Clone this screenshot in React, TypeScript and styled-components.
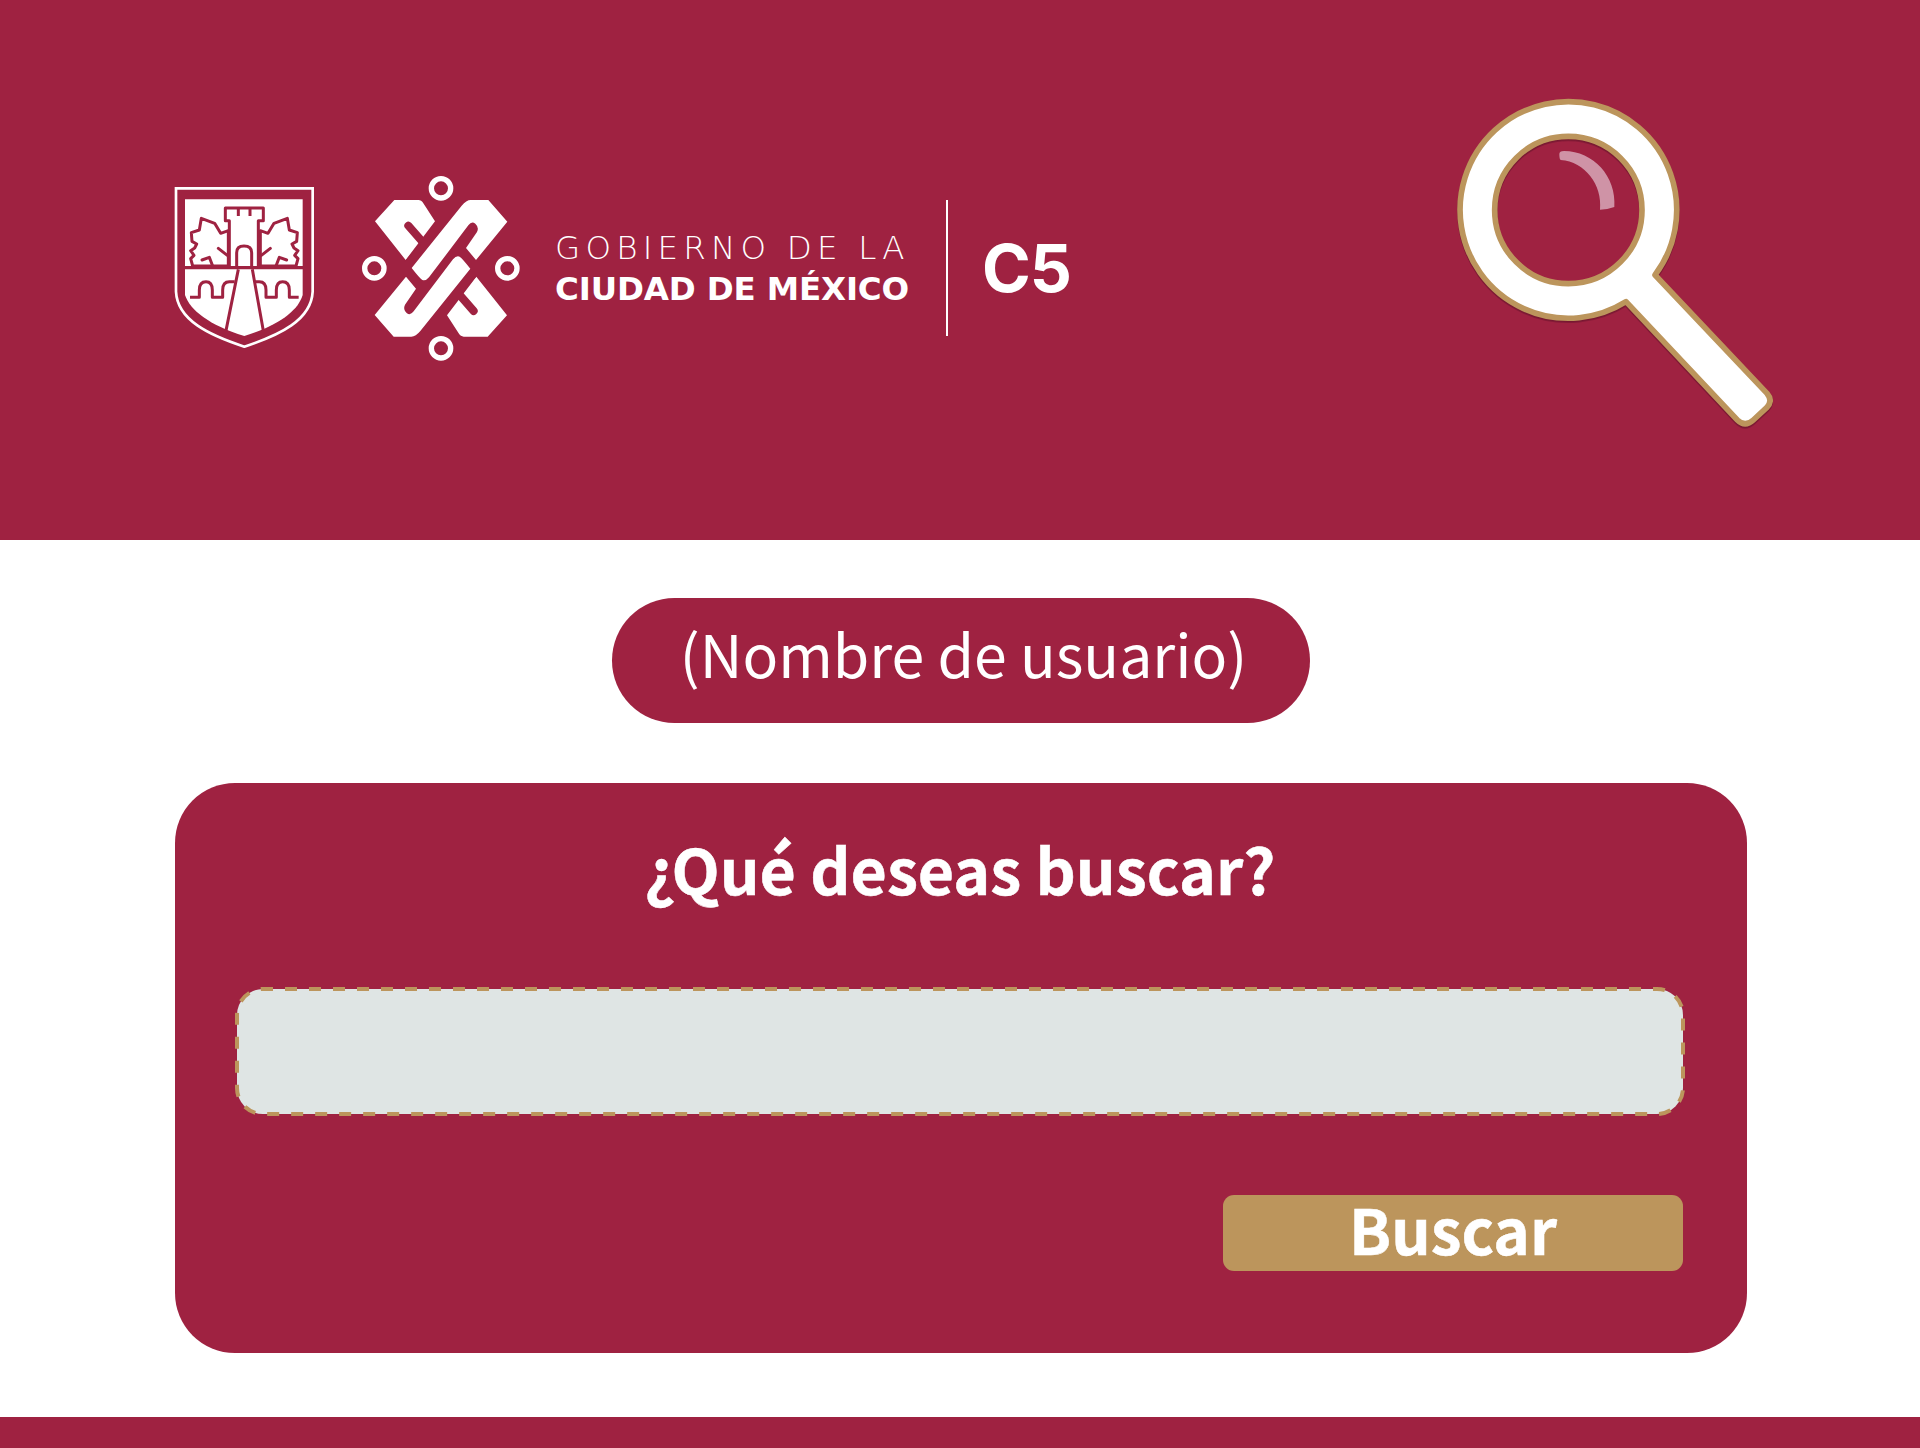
import React from "react";
import styled, { createGlobalStyle } from "styled-components";

const burgundy = "#9f2241";
const gold = "#bc955c";
const cjk = `"Noto Sans CJK SC", "Noto Sans", sans-serif`;

const Global = createGlobalStyle`
  html, body { margin: 0; padding: 0; background: #fff; }
  * { box-sizing: border-box; }
`;

const Page = styled.div`
  width: 1920px;
  height: 1448px;
  display: flex;
  flex-direction: column;
  background: #fff;
  overflow: hidden;
`;

const Header = styled.header`
  height: 540px;
  flex: none;
  background: ${burgundy};
  display: flex;
  justify-content: space-between;
  align-items: flex-start;
  padding: 0 130px 0 170px;
`;

const LogoRow = styled.div`
  margin-top: 174px;
  height: 188px;
  display: flex;
  align-items: center;
`;

const Shield = styled.svg`
  width: 150px;
  height: 184px;
  flex: none;
`;

const Knot = styled.svg`
  width: 162px;
  height: 188px;
  flex: none;
  margin-left: 40px;
`;

const Wordmark = styled.div`
  margin-left: 33px;
  width: 356px;
  display: flex;
  flex-direction: column;
  gap: 9px;
  color: #fff;
  font-family: "DejaVu Sans", sans-serif;
  white-space: nowrap;
`;

const WordLine = styled.div<{ $bold?: boolean }>`
  font-size: 32.5px;
  line-height: 32px;
  height: 32px;
  font-weight: ${(p) => (p.$bold ? 700 : 200)};
  letter-spacing: ${(p) => (p.$bold ? "-0.15px" : "5.2px")};
`;

const Divider = styled.div`
  width: 2px;
  height: 136px;
  background: #fff;
  margin-left: 35px;
  flex: none;
`;

const Unit = styled.div`
  margin-left: 34px;
  color: #fff;
  font-family: Inter, sans-serif;
  font-size: 66px;
  font-weight: 700;
  line-height: 66px;
  letter-spacing: -1px;
`;

const Magnifier = styled.svg`
  width: 350px;
  height: 360px;
  margin-top: 80px;
  flex: none;
`;

const Main = styled.main`
  flex: 1;
  display: flex;
  flex-direction: column;
  align-items: center;
  padding: 58px 0 0 2px;
`;

const UserPill = styled.div`
  width: 698px;
  height: 125px;
  padding-left: 5px;
  border-radius: 62.5px;
  background: ${burgundy};
  color: #fff;
  font-family: ${cjk};
  font-weight: 400;
  font-size: 59px;
  line-height: 110px;
  text-align: center;
`;

const Card = styled.section`
  margin-top: 60px;
  width: 1572px;
  height: 570px;
  border-radius: 60px;
  background: ${burgundy};
  display: flex;
  flex-direction: column;
  padding: 0 64px 82px 62px;
`;

const Title = styled.h1`
  margin: 0;
  height: 206px;
  color: #fff;
  font-family: ${cjk};
  font-weight: 700;
  font-size: 62.6px;
  line-height: 170px;
  text-align: center;
  -webkit-text-stroke: 0.5px #fff;
`;

const Field = styled.div`
  position: relative;
  height: 125px;
  flex: none;
`;

const SearchInput = styled.input`
  display: block;
  width: 100%;
  height: 100%;
  border: 0;
  outline: 0;
  border-radius: 26px;
  background: #dfe5e4;
`;

const DashOutline = styled.svg`
  position: absolute;
  left: -3px;
  top: -3px;
  width: calc(100% + 6px);
  height: calc(100% + 6px);
  pointer-events: none;
`;

const Actions = styled.div`
  margin-top: auto;
  display: flex;
  justify-content: flex-end;
`;

const SearchButton = styled.button`
  width: 460px;
  height: 76px;
  border: 0;
  border-radius: 11px;
  background: ${gold};
  color: #fff;
  font-family: ${cjk};
  font-weight: 700;
  font-size: 62px;
  line-height: 60px;
  padding: 0 0 10px;
  -webkit-text-stroke: 0.5px #fff;
`;

const Footer = styled.footer`
  height: 31px;
  flex: none;
  background: ${burgundy};
`;

const D = burgundy;

const ShieldLogo = () => (
  <Shield viewBox="0 -12 450 552" aria-hidden>
    <path d="M18 25H428V335C424 420 330 465 223 500C116 465 22 420 18 335Z" fill="none" stroke="#fff" strokeWidth="8" />
    <path d="M45 58H398V258H45Z" fill="#fff" />
    <path d="M45 268H398V345C385 390 330 435 223 468C116 435 60 390 45 345Z" fill="#fff" />
    <g fill="#fff" stroke={D} strokeWidth="9" strokeLinejoin="round">
      <path d="M175 152L152 160L134 130L94 115L88 150L64 158L66 184L80 192L74 204L62 212L72 226L62 236L68 258H175Z" />
      <path d="M271 152L294 160L312 130L352 115L358 150L382 158L380 184L366 192L372 204L384 212L374 226L384 236L378 258H271Z" />
      <path d="M178 258V122H166V84H280V122H265V258" />
      <path d="M200 258V218Q200 198 222 198Q245 198 245 218V258" />
    </g>
    <g fill="none" stroke={D} strokeWidth="9" strokeLinecap="round" strokeLinejoin="round">
      <path d="M205 84V108M240 84V108" strokeLinecap="butt" />
      <path d="M145 205L172 226" />
      <path d="M301 205L274 226" />
      <path d="M96 240L118 232L128 258" />
      <path d="M350 240L328 232L318 258" />
      <path d="M205 268L168 452M247 268L280 452" strokeLinecap="butt" />
      <path d="M60 352H88V330Q88 305 108 305Q127 305 127 330V352H158V330Q158 305 178 305H194" strokeLinecap="butt" />
      <path d="M386 352H358V330Q358 305 338 305Q319 305 319 330V352H288V330Q288 305 268 305H254" strokeLinecap="butt" />
    </g>
  </Shield>
);

const knotHook =
  "M645 182L703 118H775Q784 118 790 128L825 182L737 298Z";
const knotStrand =
  "M755 322L905 135Q919 118 932 118H985L1042 183L948 298L918 262L951 214Q958 200 946 189Q935 180 925 194L807 350Q797 362 787 358Q780 354 755 322Z";

const KnotHalf = () => (
  <>
    <path d={knotHook} fill="#fff" />
    <path d="M745 195L800 258" stroke={D} strokeWidth="24" strokeLinecap="round" fill="none" />
    <path d="M785 244L745 296L735 302L770 262Z" fill={D} stroke={D} strokeWidth="2" />
    <path d={knotStrand} fill="#fff" />
  </>
);

const CityKnot = () => (
  <Knot viewBox="600 40 486 564" aria-hidden>
    <g fill="none" stroke="#fff" strokeWidth="16">
      <circle cx="843" cy="83" r="29" />
      <circle cx="643" cy="323" r="29" />
      <circle cx="1042" cy="323" r="29" />
      <circle cx="843" cy="563" r="29" />
    </g>
    <KnotHalf />
    <g transform="rotate(180 843 323)">
      <KnotHalf />
    </g>
  </Knot>
);

const SearchGlass = () => (
  <Magnifier viewBox="0 0 1050 1080" aria-hidden>
    <path
      style={{ filter: "drop-shadow(0 5px 0 rgba(70,10,30,.45))" }}
      fillRule="evenodd"
      fill="#fff"
      stroke={gold}
      strokeWidth="17"
      strokeLinejoin="round"
      d="M645 585L981 940Q1000 963 980 983L940 1020Q915 1043 892 1020L558 665A325 325 0 1 1 645 585ZM385 169A221 221 0 1 0 385 611A221 221 0 1 0 385 169Z"
    />
    <path
      fill="#cf93a6"
      d="M358 222Q358 213 372 213C460 213 530 290 523 381Q502 389 480 389C488 315 435 245 362 240Q358 238 358 222Z"
    />
  </Magnifier>
);

export default function App() {
  return (
    <Page>
      <Global />
      <Header>
        <LogoRow>
          <ShieldLogo />
          <CityKnot />
          <Wordmark>
            <WordLine>GOBIERNO DE LA</WordLine>
            <WordLine $bold>CIUDAD DE MÉXICO</WordLine>
          </Wordmark>
          <Divider />
          <Unit>C5</Unit>
        </LogoRow>
        <SearchGlass />
      </Header>
      <Main>
        <UserPill>(Nombre de usuario)</UserPill>
        <Card>
          <Title>¿Qué deseas buscar?</Title>
          <Field>
            <SearchInput type="text" aria-label="¿Qué deseas buscar?" />
            <DashOutline aria-hidden>
              <rect
                x="3"
                y="3"
                width="1446"
                height="125"
                rx="26"
                fill="none"
                stroke={gold}
                strokeWidth="4"
                strokeDasharray="12 12"
                strokeDashoffset="2"
              />
            </DashOutline>
          </Field>
          <Actions>
            <SearchButton type="button">Buscar</SearchButton>
          </Actions>
        </Card>
      </Main>
      <Footer />
    </Page>
  );
}
